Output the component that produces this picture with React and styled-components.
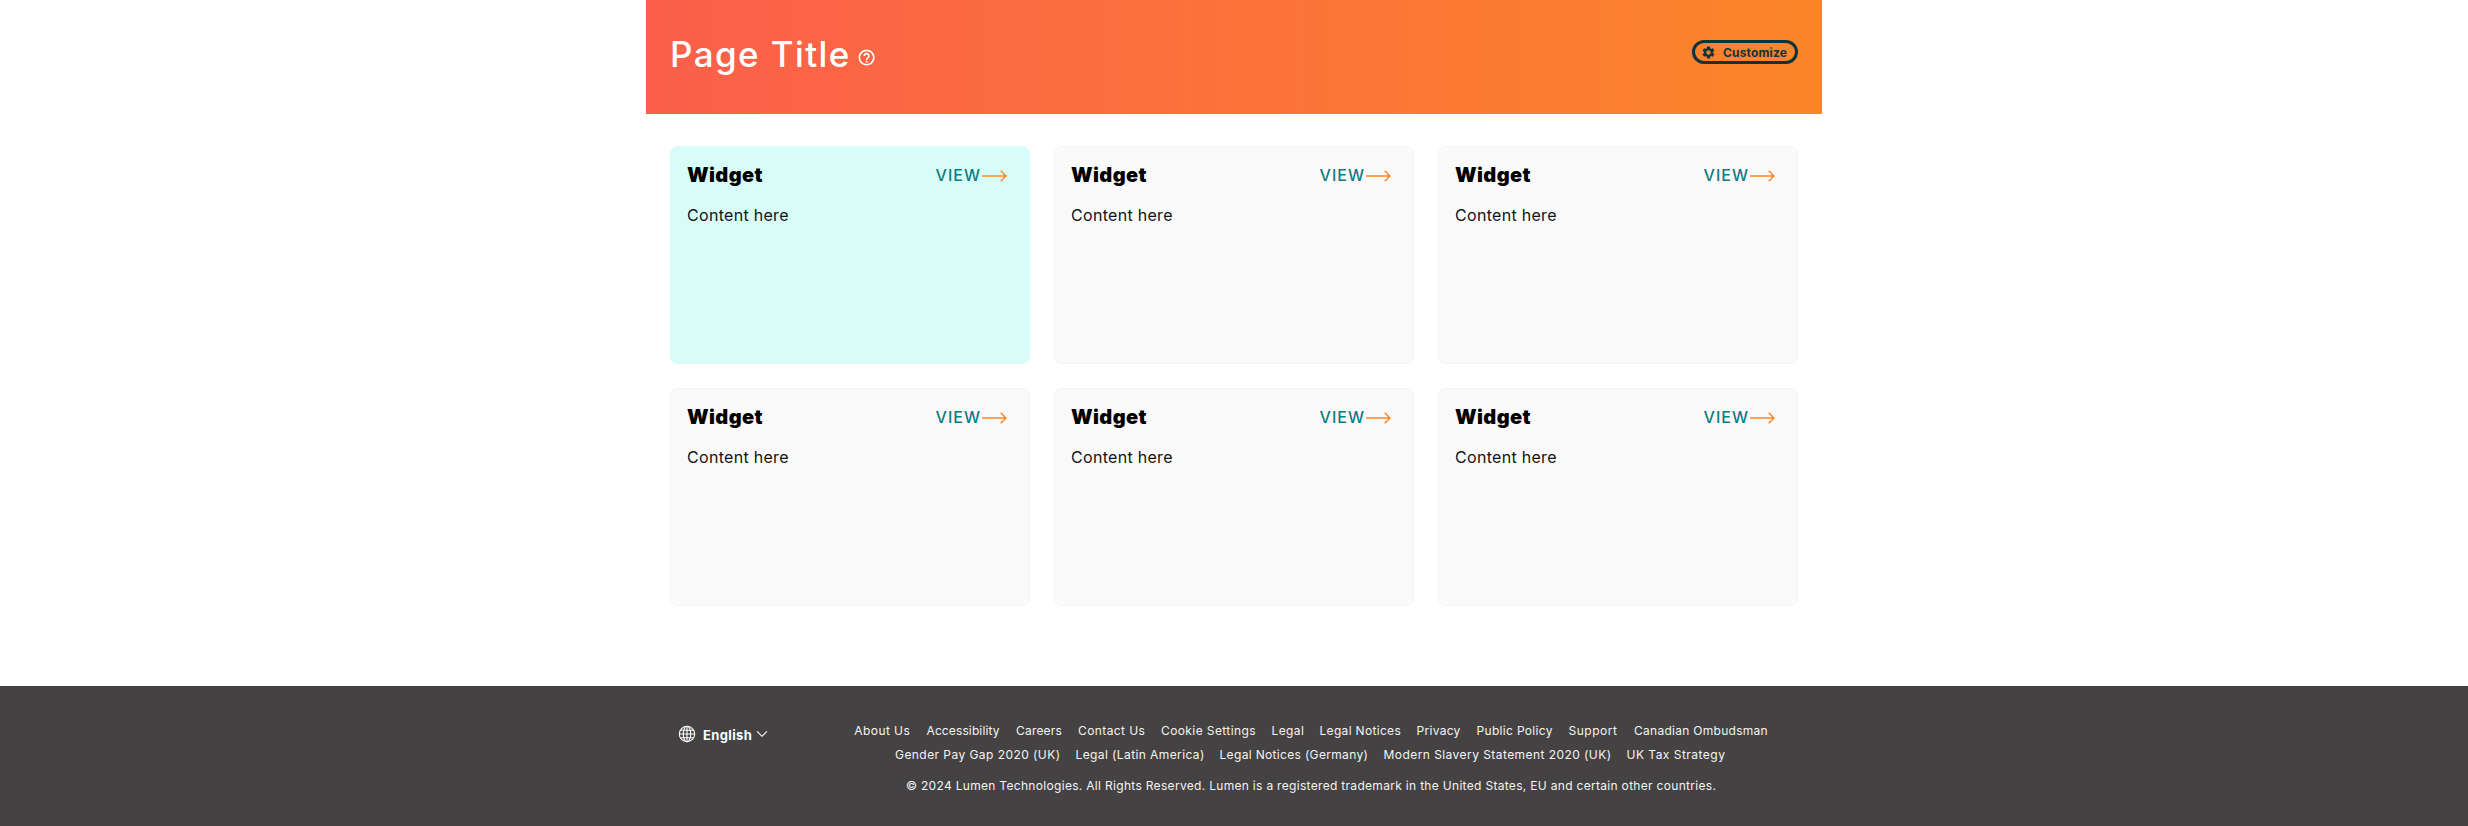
import React from "react";
import styled, { createGlobalStyle } from "styled-components";
import { MdHelpOutline, MdSettings } from "react-icons/md";

const GlobalStyle = createGlobalStyle`
  * { box-sizing: border-box; }
  body { margin: 0; background: #fff; font-family: "Inter", "Liberation Sans", sans-serif; }
  h1, h2, p { margin: 0; }
`;

const Page = styled.div`
  display: flex;
  flex-direction: column;
  height: 826px;
`;

const Banner = styled.header`
  display: flex;
  justify-content: space-between;
  align-items: flex-start;
  width: 1176px;
  height: 114px;
  margin: 0 auto;
  padding: 0 24px;
  background: linear-gradient(90deg, #fb5f4b 0%, #fc8529 100%);
`;

const TitleGroup = styled.div`
  display: flex;
  align-items: center;
  padding-top: 34px;
  color: #fff;
  svg { width: 19.2px; height: 19.2px; margin: 8px 0 0 6.5px; }
`;

const Title = styled.h1`
  font-size: 35px;
  font-weight: 500;
  line-height: 40px;
  letter-spacing: 1.4px;
`;

const CustomizeButton = styled.button`
  display: flex;
  align-items: center;
  width: 106px;
  height: 24px;
  margin-top: 40px;
  padding: 0 0 0 6px;
  border: 3px solid #10333a;
  border-radius: 12px;
  background: transparent;
  color: #10333a;
  font: 700 12px/16px "Inter", sans-serif;
  letter-spacing: 0.15px;
  svg { width: 15px; height: 15px; margin-right: 7px; }
`;

const ButtonLabel = styled.span`
  padding-top: 2px;
`;

const Grid = styled.main`
  display: grid;
  grid-template-columns: repeat(3, 360px);
  grid-auto-rows: 218px;
  gap: 24px;
  width: 1176px;
  margin: 0 auto;
  padding: 32px 24px 0;
`;

const Card = styled.section`
  padding: 16px 22px 0 16px;
  border: 1px solid ${(p) => (p.$active ? "#d8fdf8" : "#f4f4f4")};
  border-radius: 8px;
  background: ${(p) => (p.$active ? "#d8fdf8" : "#fafafa")};
`;

const CardHeader = styled.div`
  display: flex;
  align-items: center;
  justify-content: space-between;
  height: 24px;
`;

const CardTitle = styled.h2`
  color: #000;
  font-size: 20px;
  font-weight: 900;
  line-height: 24px;
  letter-spacing: 0.4px;
`;

const ViewLink = styled.a`
  display: flex;
  align-items: center;
  color: #087d84;
  font-size: 16px;
  font-weight: 500;
  line-height: 24px;
  letter-spacing: 1px;
  svg { margin: 1px 0 0 1px; }
`;

const CardText = styled.p`
  margin-top: 16px;
  color: #121212;
  font-size: 16px;
  line-height: 24px;
  letter-spacing: 0.3px;
`;

const Footer = styled.footer`
  height: 140px;
  margin-top: auto;
  background: #444243;
  color: #f4f4f4;
`;

const FooterInner = styled.div`
  display: flex;
  width: 1176px;
  margin: 0 auto;
  padding: 36px 0 0 32px;
`;

const Language = styled.div`
  display: flex;
  align-items: center;
  width: 173px;
  height: 24px;
  color: #fff;
  font-size: 13px;
  font-weight: 700;
  letter-spacing: 0.35px;
  svg:last-child { margin: -1px 0 0 4px; }
`;

const LanguageName = styled.span`
  margin: 2px 0 0 7px;
  line-height: 16px;
`;

const FooterText = styled.div`
  width: 920px;
  font-size: 12px;
`;

const LinkRow = styled.nav`
  display: flex;
  justify-content: center;
  gap: 16px;
  height: 24px;
  line-height: 18px;
`;

const FooterLink = styled.a`
  width: ${(p) => p.$width}px;
  letter-spacing: ${(p) => p.$tracking}px;
  white-space: nowrap;
`;

const Copyright = styled.p`
  width: 810px;
  margin: 7px auto 0;
  line-height: 18px;
  letter-spacing: 0.31px;
  white-space: nowrap;
`;

const linkRows = [
  [
    ["About Us", 56.2, 0.42],
    ["Accessibility", 73.5, 0.12],
    ["Careers", 46, 0.2],
    ["Contact Us", 67, 0.4],
    ["Cookie Settings", 94.5, 0.4],
    ["Legal", 32, 0.4],
    ["Legal Notices", 81, 0.32],
    ["Privacy", 44, 0.3],
    ["Public Policy", 76, 0.32],
    ["Support", 49.5, 0.5],
    ["Canadian Ombudsman", 133.7, 0.28],
  ],
  [
    ["Gender Pay Gap 2020 (UK)", 164.5, 0.44],
    ["Legal (Latin America)", 128, 0.4],
    ["Legal Notices (Germany)", 148, 0.33],
    ["Modern Slavery Statement 2020 (UK)", 227, 0.44],
    ["UK Tax Strategy", 100.5, 0.48],
  ],
];

const Arrow = () => (
  <svg width="25" height="12" viewBox="0 0 25 12" fill="none" stroke="#ff8527" strokeWidth="1.4">
    <path d="M0 6H24M18.7 0.8L24 6L18.7 11.2" />
  </svg>
);

const Globe = () => (
  <svg width="18" height="18" viewBox="0 0 18 18" fill="none" stroke="currentColor" strokeWidth="1.1">
    <circle cx="9" cy="9" r="7.7" />
    <ellipse cx="9" cy="9" rx="3.7" ry="7.7" />
    <path d="M9 1.3V16.7M1.3 9H16.7M2.4 5.2H15.6M2.4 12.8H15.6" />
  </svg>
);

const Chevron = () => (
  <svg width="12" height="8" viewBox="0 0 12 8" fill="none" stroke="currentColor" strokeWidth="1.1">
    <path d="M1 1.3L6 6.3L11 1.3" />
  </svg>
);

const Widget = ({ active }) => (
  <Card $active={active}>
    <CardHeader>
      <CardTitle>Widget</CardTitle>
      <ViewLink>
        VIEW
        <Arrow />
      </ViewLink>
    </CardHeader>
    <CardText>Content here</CardText>
  </Card>
);

export default function App() {
  return (
    <>
      <GlobalStyle />
      <Page>
        <Banner>
          <TitleGroup>
            <Title>Page Title</Title>
            <MdHelpOutline />
          </TitleGroup>
          <CustomizeButton>
            <MdSettings />
            <ButtonLabel>Customize</ButtonLabel>
          </CustomizeButton>
        </Banner>
        <Grid>
          {[0, 1, 2, 3, 4, 5].map((i) => (
            <Widget key={i} active={i === 0} />
          ))}
        </Grid>
        <Footer>
          <FooterInner>
            <Language>
              <Globe />
              <LanguageName>English</LanguageName>
              <Chevron />
            </Language>
            <FooterText>
              {linkRows.map((row, i) => (
                <LinkRow key={i}>
                  {row.map(([label, width, tracking]) => (
                    <FooterLink key={label} $width={width} $tracking={tracking}>
                      {label}
                    </FooterLink>
                  ))}
                </LinkRow>
              ))}
              <Copyright>
                © 2024 Lumen Technologies. All Rights Reserved. Lumen is a registered trademark in the
                United States, EU and certain other countries.
              </Copyright>
            </FooterText>
          </FooterInner>
        </Footer>
      </Page>
    </>
  );
}
